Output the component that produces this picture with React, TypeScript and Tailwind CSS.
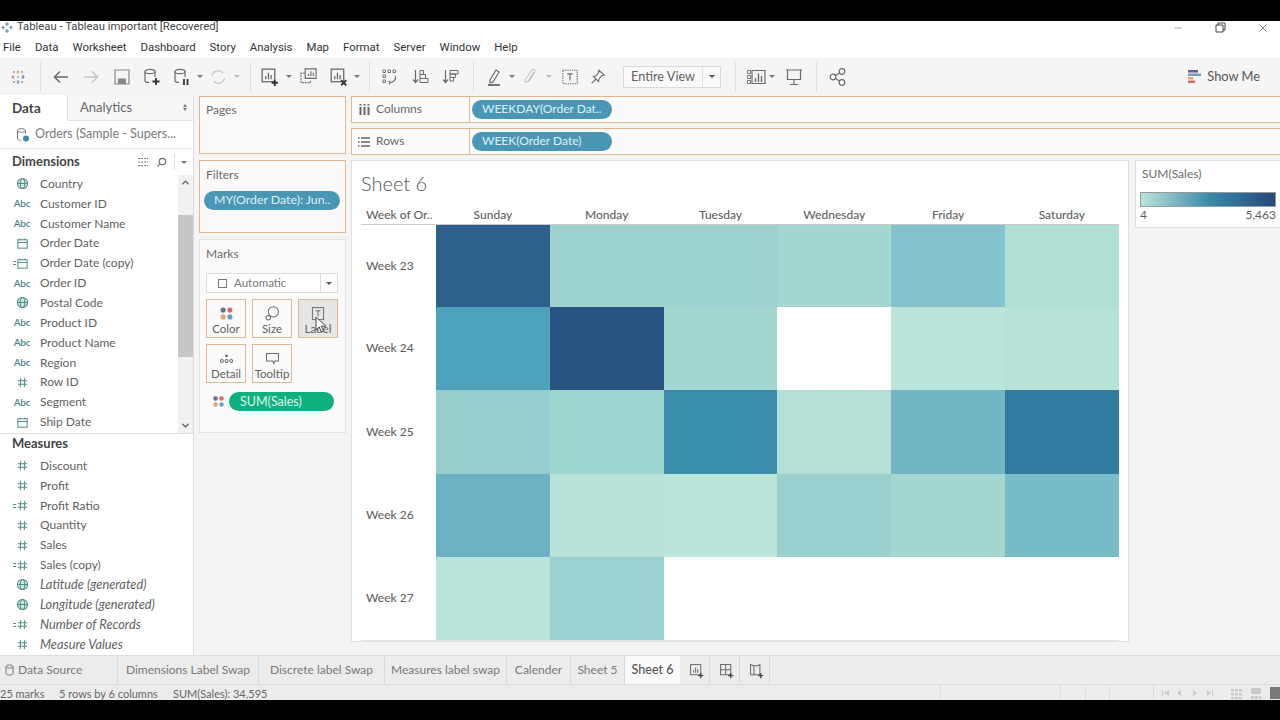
import type { ReactNode } from "react";
import { ChevronDown, ChevronUp, Minus, X } from "lucide-react";

const UI = "font-['Roboto',sans-serif]";
const TB = "font-['Lato',sans-serif]";

const MENU = ["File", "Data", "Worksheet", "Dashboard", "Story", "Analysis", "Map", "Format", "Server", "Window", "Help"];

type FieldKind = "globe" | "abc" | "date" | "calcdate" | "num" | "calcnum";
type Field = { name: string; kind: FieldKind; italic?: boolean };

const DIMENSIONS: Field[] = [
  { name: "Country", kind: "globe" },
  { name: "Customer ID", kind: "abc" },
  { name: "Customer Name", kind: "abc" },
  { name: "Order Date", kind: "date" },
  { name: "Order Date (copy)", kind: "calcdate" },
  { name: "Order ID", kind: "abc" },
  { name: "Postal Code", kind: "globe" },
  { name: "Product ID", kind: "abc" },
  { name: "Product Name", kind: "abc" },
  { name: "Region", kind: "abc" },
  { name: "Row ID", kind: "num" },
  { name: "Segment", kind: "abc" },
  { name: "Ship Date", kind: "date" },
];

const MEASURES: Field[] = [
  { name: "Discount", kind: "num" },
  { name: "Profit", kind: "num" },
  { name: "Profit Ratio", kind: "calcnum" },
  { name: "Quantity", kind: "num" },
  { name: "Sales", kind: "num" },
  { name: "Sales (copy)", kind: "calcnum" },
  { name: "Latitude (generated)", kind: "globe", italic: true },
  { name: "Longitude (generated)", kind: "globe", italic: true },
  { name: "Number of Records", kind: "calcnum", italic: true },
  { name: "Measure Values", kind: "num", italic: true },
];

const DAYS = ["Sunday", "Monday", "Tuesday", "Wednesday", "Friday", "Saturday"];

const HEAT = [
  { week: "Week 23", h: "h-[82px]", cells: ["#2c5f89", "#9dd2cf", "#9dd2cf", "#a5d7d1", "#84c3cb", "#b0dfd4"] },
  { week: "Week 24", h: "h-[83px]", cells: ["#4fa2bb", "#27527f", "#a5d7d1", "#ffffff", "#bbe4da", "#b6e2d7"] },
  { week: "Week 25", h: "h-[84px]", cells: ["#95cecd", "#a0d4cf", "#3a8cab", "#b4e0d5", "#70b6c5", "#317a9f"] },
  { week: "Week 26", h: "h-[83px]", cells: ["#6bb3c4", "#b9e3d9", "#bbe4da", "#9ad1ce", "#a5d7d1", "#78bcc7"] },
  { week: "Week 27", h: "h-[83px]", cells: ["#bbe4da", "#9cd1cf", "#ffffff", "#ffffff", "#ffffff", "#ffffff"] },
];

const TABS = [
  { label: "Dimensions Label Swap", w: "w-[141px]" },
  { label: "Discrete label Swap", w: "w-[126px]" },
  { label: "Measures label swap", w: "w-[122px]" },
  { label: "Calender", w: "w-[64px]" },
  { label: "Sheet 5", w: "w-[54px]" },
];

// small svg wrapper so the toolbar icons all share the same stroke setup
function Ico({ children, size = 20, color = "#6b6b6b" }: { children: ReactNode; size?: number; color?: string }) {
  return (
    <svg width={size} height={size} viewBox="0 0 20 20" fill="none" stroke={color} strokeWidth="1.2">
      {children}
    </svg>
  );
}

function Caret({ color = "#777" }: { color?: string }) {
  return <span className="inline-block h-0 w-0 border-x-[3px] border-t-[3px] border-x-transparent" style={{ borderTopColor: color }} />;
}

function Tool({ w, children }: { w: string; children?: ReactNode }) {
  return <div className={`flex shrink-0 items-center justify-center ${w}`}>{children}</div>;
}

function Sep({ ml, mr }: { ml: string; mr: string }) {
  return <div className={`h-[30px] w-px shrink-0 bg-[#e0e0e0] ${ml} ${mr}`} />;
}

function BarGlyph() {
  return (
    <>
      <rect x="3" y="3" width="12" height="12" />
      <path d="M6.5 12.5v-3M9 12.5v-6M11.5 12.5v-4" />
    </>
  );
}

function DotsGlyph() {
  return (
    <>
      <circle cx="6" cy="6" r="3" fill="#6f6a86" stroke="none" />
      <circle cx="14" cy="6" r="3" fill="#d9666f" stroke="none" />
      <circle cx="6" cy="14" r="3" fill="#e2a271" stroke="none" />
      <circle cx="14" cy="14" r="3" fill="#6f9fc0" stroke="none" />
    </>
  );
}

function FieldIcon({ kind }: { kind: FieldKind }) {
  const color = "#4f8f88";
  if (kind === "abc") {
    return <span className={`${TB} text-[10px] font-semibold tracking-[-0.2px] text-[#4a8588]`}>Abc</span>;
  }
  const calc = kind === "calcdate" || kind === "calcnum";
  return (
    <span className="relative flex h-[14px] w-[14px] items-center justify-center">
      {calc && <span className="absolute -left-[2px] top-[5px] h-[4px] w-[3px] border-y border-[#4f8f88]" />}
      <svg width="13" height="13" viewBox="0 0 14 14" fill="none" stroke={color} strokeWidth="1.1">
        {kind === "globe" && (
          <>
            <circle cx="7" cy="7" r="5.5" fill="#cfe6e1" />
            <ellipse cx="7" cy="7" rx="2.4" ry="5.5" />
            <path d="M1.5 7h11" />
          </>
        )}
        {(kind === "date" || kind === "calcdate") && (
          <>
            <rect x="2" y="3" width="10" height="9" />
            <path d="M2 5.8h10M4.5 1.5v2M9.5 1.5v2" />
          </>
        )}
        {(kind === "num" || kind === "calcnum") && <path d="M5 2 4.6 12M9.4 2 9 12M2 5h10M2 9h10" />}
      </svg>
    </span>
  );
}

function FieldRow({ field }: { field: Field }) {
  return (
    <div className="flex h-[19.85px] items-center">
      <div className="flex w-[40px] shrink-0 justify-center pl-[4px]">
        <FieldIcon kind={field.kind} />
      </div>
      <span className={`${TB} whitespace-nowrap text-[#5f5f5f] ${field.italic ? "text-[12.8px] italic" : "text-[12px]"}`}>{field.name}</span>
    </div>
  );
}

function Pill({ children, className }: { children: ReactNode; className: string }) {
  return <div className={`${TB} flex h-[19px] items-center whitespace-nowrap rounded-full ${className}`}>{children}</div>;
}

function MarkCard({ label, active, children }: { label: string; active?: boolean; children: ReactNode }) {
  return (
    <div className={`flex h-[39px] w-[40px] flex-col items-center border border-[#dcb98f] ${active ? "bg-[#e6e6e6]" : "bg-[#fafafa]"}`}>
      <div className="flex h-[22px] items-end">{children}</div>
      <span className={`${TB} whitespace-nowrap text-[11.5px] leading-[14px] text-[#5f5f5f]`}>{label}</span>
    </div>
  );
}

function Shelf({ label, icon, pill, className }: { label: string; icon: ReactNode; pill: string; className: string }) {
  return (
    <div className={`flex h-[27px] border-y border-l border-[#dcb98f] bg-[#fafafa] ${className}`}>
      <div className="flex w-[118px] items-center border-r border-[#dcb98f]">
        <span className="flex w-[24px] justify-center">{icon}</span>
        <span className={`${TB} pb-[2px] text-[12px] text-[#6a6a6a]`}>{label}</span>
      </div>
      <div className="flex items-center pl-[2px]">
        <Pill className="w-[140px] bg-[#4a97b5] pb-[2px] pl-[10px] text-[12px] text-[#dff1f6]">{pill}</Pill>
      </div>
    </div>
  );
}

function DataPane() {
  return (
    <aside className="flex w-[194px] shrink-0 flex-col border-r border-[#dcdcdc] bg-white">
      <div className="flex h-[26px] shrink-0">
        <div className={`${TB} flex w-[68px] items-center border-r border-[#e2e2e2] pl-[12px] text-[13.5px] font-bold text-[#444]`}>Data</div>
        <div className={`${TB} flex flex-1 items-center justify-between border-b border-[#e2e2e2] bg-[#f7f7f7] pl-[12px] pr-[6px] text-[13px] text-[#666]`}>
          Analytics
          <span className="flex flex-col gap-[1px]">
            <span className="h-0 w-0 border-x-[2.5px] border-b-[3px] border-x-transparent border-b-[#777]" />
            <span className="h-0 w-0 border-x-[2.5px] border-t-[3px] border-x-transparent border-t-[#777]" />
          </span>
        </div>
      </div>
      <div className="flex h-[28px] shrink-0 items-center border-b border-[#e6e6e6] pl-[15px]">
        <svg width="16" height="16" viewBox="0 0 16 16" fill="none" stroke="#777" strokeWidth="1">
          <path d="M2.5 3.5v8c0 1 1 1.6 3 1.6M10.500 3.500v3" />
          <ellipse cx="6.5" cy="3.5" rx="4" ry="1.8" />
          <circle cx="11" cy="11.5" r="3" fill="#3a8cab" stroke="none" />
        </svg>
        <span className={`${TB} ml-[4px] whitespace-nowrap text-[12.5px] text-[#7a7a7a]`}>Orders (Sample - Supers...</span>
      </div>
      <div className="flex h-[26px] shrink-0 items-center pl-[12px] pr-[6px]">
        <span className={`${TB} flex-1 text-[13px] font-bold text-[#444]`}>Dimensions</span>
        <svg width="12" height="10" viewBox="0 0 12 10" fill="none" stroke="#777" strokeDasharray="2 1">
          <path d="M1 1.500h10M1 5h10M1 8.500h10" />
        </svg>
        <svg className="ml-[7px]" width="11" height="11" viewBox="0 0 12 12" fill="none" stroke="#666" strokeWidth="1.2">
          <circle cx="7" cy="5" r="3.5" />
          <path d="M4.500 7.500 1.500 10.500" />
        </svg>
        <div className="ml-[7px] mr-[6px] h-[16px] w-px bg-[#ddd]" />
        <Caret />
      </div>
      <div className="flex h-[258px] shrink-0">
        <div className="-mt-px min-w-0 flex-1 overflow-hidden">
          {DIMENSIONS.map((f) => (
            <FieldRow key={f.name} field={f} />
          ))}
        </div>
        <div className="flex w-[15px] shrink-0 flex-col bg-[#f1f1f1]">
          <div className="flex h-[15px] items-center justify-center">
            <ChevronUp size={11} strokeWidth={3} color="#555" />
          </div>
          <div className="mt-[25px] h-[142px] bg-[#c6c6c6]" />
          <div className="flex-1" />
          <div className="flex h-[15px] items-center justify-center">
            <ChevronDown size={11} strokeWidth={3} color="#555" />
          </div>
        </div>
      </div>
      <div className="flex-1 overflow-hidden border-t border-[#dedede]">
        <div className={`${TB} flex h-[22px] items-center pb-[2px] pl-[12px] text-[13px] font-bold text-[#444]`}>Measures</div>
        {MEASURES.map((f) => (
          <FieldRow key={f.name} field={f} />
        ))}
      </div>
    </aside>
  );
}

function CardsColumn() {
  return (
    <div className="flex w-[157px] shrink-0 flex-col px-[5px] pt-[1px]">
      <div className="h-[58px] border border-[#dcb98f] bg-[#fafafa] px-[6px] pt-[5px]">
        <div className={`${TB} text-[12px] leading-[16px] text-[#6a6a6a]`}>Pages</div>
      </div>
      <div className="mt-[6px] h-[73px] border border-[#dcb98f] bg-[#fafafa] px-[4px] pt-[6px]">
        <div className={`${TB} pl-[2px] text-[12px] leading-[16px] text-[#6a6a6a]`}>Filters</div>
        <Pill className="mt-[8px] w-[136px] bg-[#4a97b5] pl-[10px] text-[12.3px] text-[#dff1f6]">MY(Order Date): Jun..</Pill>
      </div>
      <div className="relative mt-[6px] h-[194px] border border-[#e2e2e2] bg-[#fafafa] px-[6px] pt-[6px]">
        <div className={`${TB} text-[12px] leading-[16px] text-[#6a6a6a]`}>Marks</div>
        <div className="mt-[11px] flex h-[20px] w-[132px] items-center border border-[#dadada] bg-white">
          <span className="ml-[11px] h-[9px] w-[9px] border border-[#777]" />
          <span className={`${TB} ml-[7px] flex-1 text-[11.5px] text-[#777]`}>Automatic</span>
          <span className="flex h-full w-[17px] items-center justify-center border-l border-[#dadada]">
            <Caret color="#555" />
          </span>
        </div>
        <div className="mt-[6px] flex gap-[6px]">
          <MarkCard label="Color">
            <Ico size={17}>
              <DotsGlyph />
            </Ico>
          </MarkCard>
          <MarkCard label="Size">
            <Ico size={17}>
              <circle cx="11" cy="8" r="6" />
              <circle cx="5" cy="15" r="2.6" fill="#fafafa" />
            </Ico>
          </MarkCard>
          <MarkCard label="Label" active>
            <Ico size={16}>
              <rect x="3" y="2" width="14" height="15" />
              <path d="M7 6h6M10 6v7" />
            </Ico>
          </MarkCard>
        </div>
        <div className="mt-[6px] flex gap-[6px]">
          <MarkCard label="Detail">
            <Ico size={17}>
              <circle cx="10" cy="7" r="1.6" fill="#666" stroke="none" />
              <circle cx="4.5" cy="13" r="1.7" />
              <circle cx="10" cy="13" r="1.7" />
              <circle cx="15.5" cy="13" r="1.7" />
            </Ico>
          </MarkCard>
          <MarkCard label="Tooltip">
            <Ico size={17}>
              <path d="M3 4h14v9h-4l-1.5 3-1-3H3z" />
            </Ico>
          </MarkCard>
        </div>
        <div className="mt-[9px] flex items-center pl-[5px]">
          <Ico size={15}>
            <DotsGlyph />
          </Ico>
          <Pill className="ml-[3px] w-[105px] bg-[#0fb07f] pl-[11px] pt-[1px] text-[12.5px] text-[#dcf5ec]">SUM(Sales)</Pill>
        </div>
        {/* mouse pointer sitting on the Label card */}
        <svg className="absolute left-[115px] top-[76px]" width="13" height="18" viewBox="0 0 13 18">
          <path d="M1 1v13l3.2-3 2.3 5 2-1-2.3-4.8H11z" fill="#fff" stroke="#444" strokeWidth="1" />
        </svg>
      </div>
    </div>
  );
}

function Heatmap() {
  return (
    <div className="flex w-[778px] shrink-0 flex-col border border-[#e0e0e0] bg-white pl-[9px] pr-[9px]">
      <div className={`${TB} h-[48px] pt-[9px] text-[20px] font-light leading-[26px] text-[#555]`}>Sheet 6</div>
      <div className="grid h-[16px] grid-cols-[75px_repeat(6,113.8px)] border-b border-[#c9c9c9]">
        <span className={`${TB} whitespace-nowrap pl-[5px] text-[12px] font-medium leading-[11px] text-[#5f5f5f]`}>Week of Or..</span>
        {DAYS.map((d) => (
          <span key={d} className={`${TB} text-center text-[12px] font-medium leading-[11px] text-[#5f5f5f]`}>
            {d}
          </span>
        ))}
      </div>
      <div className="border-b border-[#e4e4e4]">
        {HEAT.map((row) => (
          <div key={row.week} className={`grid grid-cols-[75px_repeat(6,113.8px)] ${row.h}`}>
            <span className={`${TB} flex items-center pb-[1px] pl-[5px] text-[12px] font-medium text-[#5f5f5f]`}>{row.week}</span>
            {row.cells.map((c, i) => (
              <div key={i} style={{ backgroundColor: c }} />
            ))}
          </div>
        ))}
      </div>
    </div>
  );
}

function Legend() {
  return (
    <div className="h-[68px] w-[160px] shrink-0 border border-[#e0e0e0] bg-white px-[4px] pt-[5px]">
      <div className={`${TB} pl-[2px] text-[12px] leading-[16px] text-[#6a6a6a]`}>SUM(Sales)</div>
      <div className="mt-[10px] h-[15px] w-[136px] border border-[#999] bg-gradient-to-r from-[#bbe4da] via-[#3a8cab] to-[#26497a]" />
      <div className={`${TB} flex w-[136px] justify-between text-[12px] leading-[16px] text-[#5f5f5f]`}>
        <span>4</span>
        <span>5,463</span>
      </div>
    </div>
  );
}

function Toolbar() {
  return (
    <div className="flex h-[37px] shrink-0 items-center bg-[#f5f5f5]">
      <Tool w="w-[36px]">
        <svg width="18" height="18" viewBox="0 0 18 18" strokeWidth="1.1">
          <path d="M9 2v4M7.500 4h3" stroke="#d9a06a" />
          <path d="M9 12v4M7.500 14h3" stroke="#6f93ad" />
          <path d="M4 7v4M2.500 9h3" stroke="#c9808c" />
          <path d="M14 7v4M12.500 9h3" stroke="#6f7f9a" />
          <path d="M5 3v2M4 4h2M13 3v2M12 4h2M5 13v2M4 14h2M13 13v2M12 14h2" stroke="#8f8aa0" strokeWidth="0.9" />
          <path d="M8 9h2" stroke="#777" />
        </svg>
      </Tool>
      <Sep ml="ml-[4px]" mr="mr-[5px]" />
      <Tool w="w-[30px]">
        <Ico>
          <path d="M17 10H3.500M9 4.500 3.500 10 9 15.500" strokeWidth="1.5" />
        </Ico>
      </Tool>
      <Tool w="w-[30px]">
        <Ico color="#c4c4c4">
          <path d="M3 10h13.500M11 4.500l5.500 5.500-5.500 5.500" strokeWidth="1.5" />
        </Ico>
      </Tool>
      <Tool w="w-[31px]">
        <Ico color="#888">
          <path d="M3 3h14v14H3z" />
          <path d="M6.500 17v-5h7v5" fill="#888" />
        </Ico>
      </Tool>
      <Tool w="w-[30px]">
        <Ico>
          <ellipse cx="8" cy="4.5" rx="5" ry="2.2" />
          <path d="M3 4.500v9c0 1.200 1.500 2 4 2M13 4.500V10" />
          <path d="M14 11v7M10.500 14.500h7" stroke="#333" strokeWidth="1.8" />
        </Ico>
      </Tool>
      <Tool w="w-[29px]">
        <Ico>
          <ellipse cx="8" cy="4.5" rx="5" ry="2.2" />
          <path d="M3 4.500v9c0 1.200 1.500 2 4 2M13 4.500V10" />
          <path d="M12 12v6M15.500 12v6" stroke="#333" strokeWidth="1.8" />
        </Ico>
      </Tool>
      <Tool w="w-[7px]">
        <Caret />
      </Tool>
      <Tool w="w-[30px]">
        <Ico color="#c8c8c8">
          <path d="M4 9a6.300 6.300 0 0 1 11-3M16.500 11a6.300 6.300 0 0 1-11 3" strokeWidth="1.4" />
        </Ico>
      </Tool>
      <Tool w="w-[8px]">
        <Caret color="#bbb" />
      </Tool>
      <Sep ml="ml-[9px]" mr="mr-[3px]" />
      <Tool w="w-[30px]">
        <Ico size={21} color="#666">
          <BarGlyph />
          <path d="M15 13v6M12 16h6" stroke="#333" strokeWidth="1.8" />
        </Ico>
      </Tool>
      <Tool w="w-[9px]">
        <Caret />
      </Tool>
      <Tool w="w-[31px]">
        <Ico size={19}>
          <path d="M6.500 2h11.500v10H6.500z" />
          <path d="M10 9.500V7M12.500 9.500V4.500M15 9.500V6" />
          <path d="M6 6.500H2v10h10v-3" strokeDasharray="2 1" />
        </Ico>
      </Tool>
      <Tool w="w-[28px]">
        <Ico size={21} color="#666">
          <BarGlyph />
          <path d="M12.500 13.500l5 5M17.500 13.500l-5 5" stroke="#333" strokeWidth="1.8" />
        </Ico>
      </Tool>
      <Tool w="w-[9px]">
        <Caret />
      </Tool>
      <Sep ml="ml-[8px]" mr="mr-[5px]" />
      <Tool w="w-[30px]">
        <Ico>
          <path d="M3 3h2.500v2.500H3zM8 3h2.500v2.500H8zM13 3h2.500v2.500H13zM3 8h2.500v2.500H3zM3 13h2.500v2.500H3z" strokeWidth="0.9" />
          <path d="M15.500 9c.5 3.500-1.500 6-5 6.500M8.500 14l2 1.500-1.500 2" />
        </Ico>
      </Tool>
      <Tool w="w-[31px]">
        <Ico>
          <path d="M4.500 3v12M2 12.500 4.500 15.500 7 12.500" />
          <path d="M9 3.500h3.500v4H9zM9 7.500h5.500v4H9zM9 11.500h8v4H9z" strokeWidth="1" />
        </Ico>
      </Tool>
      <Tool w="w-[30px]">
        <Ico>
          <path d="M4.500 3v12M2 12.500 4.500 15.500 7 12.500" />
          <path d="M9 3.500h8v3.500H9zM9 7h5.500v3.500H9zM9 10.500h3.500V14H9z" strokeWidth="1" />
        </Ico>
      </Tool>
      <Sep ml="ml-[7px]" mr="mr-[5px]" />
      <Tool w="w-[30px]">
        <Ico>
          <path d="M6 13 12 3l3 2-6 10-3 1z" />
          <path d="M4 18h12" stroke="#555" strokeWidth="1.6" />
        </Ico>
      </Tool>
      <Tool w="w-[5px]">
        <Caret />
      </Tool>
      <Tool w="w-[32px]">
        <Ico color="#c8c8c8">
          <path d="M14 5 7.500 14.500c-1 1.500-3.500 0-2.500-1.500L12 3c1.500-1.500 4 0 3 2L8.500 15" />
        </Ico>
      </Tool>
      <Tool w="w-[6px]">
        <Caret color="#bbb" />
      </Tool>
      <Tool w="w-[35px]">
        <Ico size={18}>
          <rect x="2" y="2.5" width="16" height="15" strokeDasharray="1.5 1" />
          <path d="M7 6.500h6M10 6.500v7.500" />
        </Ico>
      </Tool>
      <Tool w="w-[22px]">
        <Ico size={18}>
          <path d="M11 2.500 17 8l-3 .5-3 4-.3 2.500L5 9.500l2.500-.5 3-3.500zM7.500 12.500 3 17" />
        </Ico>
      </Tool>
      <div className="ml-[14px] flex h-[22px] w-[98px] shrink-0 items-center border border-[#dadada] bg-[#fafafa]">
        <span className={`${TB} flex-1 pl-[7px] text-[12.7px] text-[#5f5f5f]`}>Entire View</span>
        <span className="flex h-full w-[18px] items-center justify-center border-l border-[#e2e2e2]">
          <Caret color="#555" />
        </span>
      </div>
      <Sep ml="ml-[14px]" mr="mr-[8px]" />
      <Tool w="w-[24px]">
        <Ico>
          <path d="M1.500 3.500h3v3h-3zM1.500 8.500h3v3h-3zM1.500 13.500h3v3h-3z" strokeWidth="0.9" />
          <path d="M6 3.500h13v13H6z" />
          <path d="M9.500 15v-4M12.500 15V6.500M15.500 15V9" strokeWidth="1.4" />
        </Ico>
      </Tool>
      <Tool w="w-[8px]">
        <Caret />
      </Tool>
      <Tool w="w-[36px]">
        <Ico>
          <path d="M2 3h16M3.500 3v9.500h13V3M10 12.500V17M6 17.500h8" />
        </Ico>
      </Tool>
      <Sep ml="ml-[4px]" mr="mr-[9px]" />
      <Tool w="w-[24px]">
        <Ico>
          <circle cx="5" cy="10" r="2.8" />
          <circle cx="14" cy="4.5" r="2.8" />
          <circle cx="14" cy="15.5" r="2.8" />
          <path d="M7.500 8.500l4-2.500M7.500 11.500l4 2.500" />
        </Ico>
      </Tool>
      <div className="ml-auto mr-[20px] flex items-center">
        <svg width="14" height="15" viewBox="0 0 14 15">
          <rect x="0" y="1" width="10" height="2.5" fill="#6f5f86" />
          <rect x="0" y="4.5" width="13" height="2.5" fill="#6f9fc0" />
          <rect x="0" y="8" width="5" height="2.5" fill="#e2a271" />
          <rect x="0" y="11.5" width="7" height="2.5" fill="#d9666f" />
        </svg>
        <span className={`${TB} ml-[5px] text-[12.8px] text-[#555]`}>Show Me</span>
      </div>
    </div>
  );
}

function AddIcon({ children }: { children: ReactNode }) {
  return (
    <div className="flex w-[30px] items-center justify-center border-r border-[#d8d8d8] pl-[3px]">
      <Ico size={17}>
        {children}
        <path d="M15 13v6M12 16h6" stroke="#444" strokeWidth="1.5" />
      </Ico>
    </div>
  );
}

function TabBar() {
  return (
    <div className="flex h-[30px] shrink-0 border-y border-[#dedede] bg-[#ececec]">
      <div className="flex w-[118px] items-center border-r border-[#d8d8d8] pl-[5px]">
        <svg width="9" height="12" viewBox="0 0 9 12" fill="none" stroke="#777">
          <ellipse cx="4.5" cy="2.5" rx="3.5" ry="1.6" />
          <path d="M1 2.500v7c0 2 7 2 7 0v-7" />
        </svg>
        <span className={`${TB} ml-[4px] text-[12px] text-[#777]`}>Data Source</span>
      </div>
      {TABS.map((t) => (
        <div key={t.label} className={`${TB} flex items-center justify-center whitespace-nowrap border-r border-[#d8d8d8] text-[12px] text-[#777] ${t.w}`}>
          {t.label}
        </div>
      ))}
      <div className={`${TB} flex w-[55px] items-center justify-center bg-[#fafafa] text-[12.5px] font-medium text-[#555]`}>Sheet 6</div>
      <AddIcon>
        <BarGlyph />
      </AddIcon>
      <AddIcon>
        <path d="M3 3h12v12H3zM9 3v12M3 9h12" />
      </AddIcon>
      <AddIcon>
        <path d="M3 3l4 1.500h4L14 3v12H3zM7 4.500V15" />
      </AddIcon>
    </div>
  );
}

function StatusBar() {
  return (
    <div className="flex h-[15px] shrink-0 overflow-hidden bg-[#ececec]">
      <div className={`${TB} flex w-[940px] shrink-0 pt-[1px] text-[11px] leading-[16px] text-[#666]`}>
        <span className="w-[59px]">25 marks</span>
        <span className="w-[114px]">5 rows by 6 columns</span>
        <span>SUM(Sales): 34,595</span>
      </div>
      <div className="w-[121px] border-l border-[#dcdcdc]" />
      <div className="w-[25px] border-l border-[#dcdcdc]" />
      <div className="w-[25px] border-l border-[#dcdcdc]" />
      <div className="w-[44px] border-l border-[#dcdcdc]" />
      <div className="flex flex-1 items-center border-l border-[#dcdcdc] pl-[6px]">
        <svg width="120" height="12" viewBox="0 0 120 12" fill="#c9c9c9">
          <path d="M2 3h1v6H2zM9 3v6L4 6zM21 3v6l-4-3zM33 3l4 3-4 3zM47 3l4 3-4 3zM52 3h1v6h-1z" />
          <path d="M71 2h3v2.500h-3zM75 2h3v2.500h-3zM79 2h3v2.500h-3zM71 6h3v2.500h-3zM75 6h3v2.500h-3zM79 6h3v2.500h-3zM71 10h3v2h-3zM75 10h3v2h-3zM79 10h3v2h-3z" />
          <path d="M91 1h10v6H91zM91 9h3v3h-3zM95 9h3v3h-3zM99 9h2v3h-2z" />
          <path d="M110 0h10v12h-10z" fill="#777" />
        </svg>
      </div>
    </div>
  );
}

export default function App() {
  return (
    <div className="flex h-[720px] w-[1280px] flex-col overflow-hidden bg-black">
      <div className="h-[21px] shrink-0 bg-black" />
      <div className="flex h-[15px] shrink-0 items-center overflow-hidden bg-white pb-[2px]">
        <svg className="ml-[1px]" width="12" height="13" viewBox="0 0 12 13" stroke="#5a86a8" strokeWidth="1">
          <path d="M6 1v4M4 3h4M6 8v4M4 10h4M2 4.500v4M0.500 6.500h3M10 4.500v4M8.500 6.500h3" />
        </svg>
        <span className={`${UI} ml-[4px] text-[11.3px] text-[#444]`}>Tableau - Tableau important [Recovered]</span>
        <div className="ml-auto flex items-center">
          <Minus size={12} strokeWidth={1} color="#555" />
          <svg className="ml-[31px]" width="11" height="11" viewBox="0 0 11 11" fill="none" stroke="#444">
            <path d="M1 3h7v7H1zM3 3V1h7v7H8" />
          </svg>
          <X className="ml-[30px] mr-[10px]" size={14} strokeWidth={1} color="#333" />
        </div>
      </div>
      <div className={`${UI} flex h-[22px] shrink-0 items-center gap-[14px] bg-white pl-[3px] pt-[1px] text-[11.4px] text-[#333]`}>
        {MENU.map((m) => (
          <span key={m}>{m}</span>
        ))}
      </div>
      <Toolbar />
      <div className="flex h-[560px] shrink-0 bg-[#f4f4f4]">
        <DataPane />
        <CardsColumn />
        <div className="min-w-0 flex-1 overflow-hidden pt-[1px]">
          <Shelf
            label="Columns"
            pill="WEEKDAY(Order Dat.."
            className="w-[940px]"
            icon={
              <svg width="11" height="11" viewBox="0 0 11 11" stroke="#666" strokeWidth="2">
                <path d="M1.500 3v8M5.500 3v8M9.500 3v8" />
                <path d="M1.500 0v1.500M5.500 0v1.500M9.500 0v1.500" />
              </svg>
            }
          />
          <Shelf
            label="Rows"
            pill="WEEK(Order Date)"
            className="mt-[5px] w-[940px]"
            icon={
              <svg width="12" height="10" viewBox="0 0 12 10" stroke="#666" strokeWidth="1.3">
                <path d="M3 1h9M3 5h9M3 9h9M0 1h1.500M0 5h1.500M0 9h1.500" />
              </svg>
            }
          />
          <div className="mt-[5px] flex gap-[6px]">
            <Heatmap />
            <Legend />
          </div>
        </div>
      </div>
      <TabBar />
      <StatusBar />
      <div className="flex-1 bg-black" />
    </div>
  );
}
